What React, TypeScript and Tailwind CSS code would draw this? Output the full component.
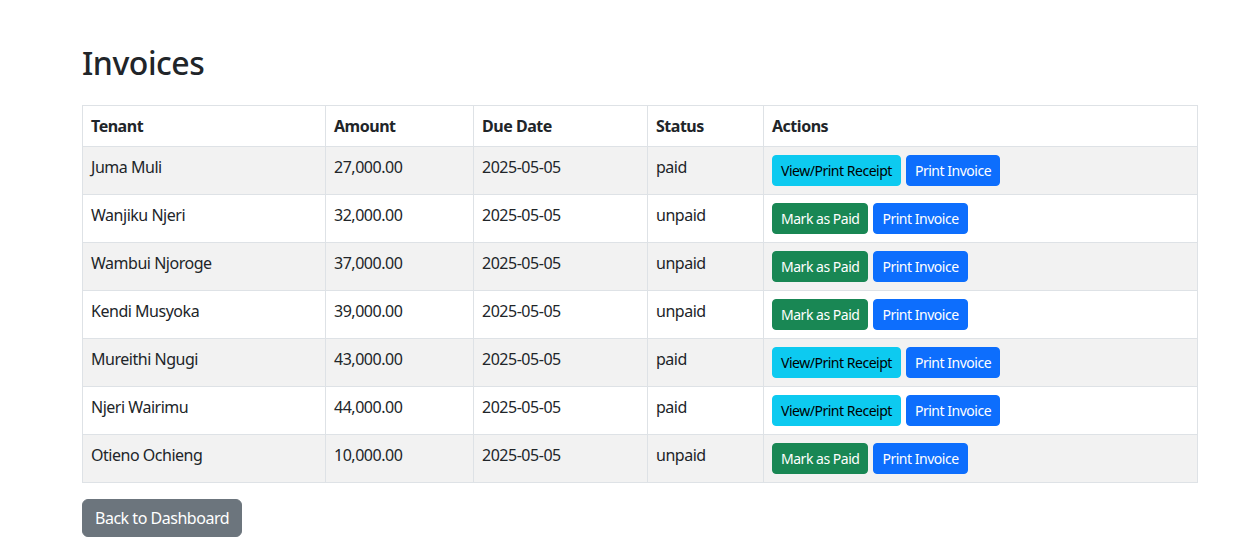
import React from 'react';

type Invoice = {
  tenant: string;
  amount: string;
  due: string;
  status: 'paid' | 'unpaid';
};

const invoices: Invoice[] = [
  { tenant: 'Juma Muli', amount: '27,000.00', due: '2025-05-05', status: 'paid' },
  { tenant: 'Wanjiku Njeri', amount: '32,000.00', due: '2025-05-05', status: 'unpaid' },
  { tenant: 'Wambui Njoroge', amount: '37,000.00', due: '2025-05-05', status: 'unpaid' },
  { tenant: 'Kendi Musyoka', amount: '39,000.00', due: '2025-05-05', status: 'unpaid' },
  { tenant: 'Mureithi Ngugi', amount: '43,000.00', due: '2025-05-05', status: 'paid' },
  { tenant: 'Njeri Wairimu', amount: '44,000.00', due: '2025-05-05', status: 'paid' },
  { tenant: 'Otieno Ochieng', amount: '10,000.00', due: '2025-05-05', status: 'unpaid' },
];

const cell = 'border border-[#dee2e6] px-2 py-2 align-top';

const App = () => {
  return (
    <div className="min-h-screen bg-white text-[#212529] font-['Segoe_UI','Noto_Sans',sans-serif] tracking-[-0.03em] text-base leading-6">
      <div className="w-[1116px] pt-[44px] ml-[82px]">
        <h2 className="text-[32px] leading-[1.2] font-medium mb-[23px]">Invoices</h2>

        <table className="w-full border-collapse mb-4">
          <thead>
            <tr>
              <th className={`${cell} text-left font-bold w-[243px]`}>Tenant</th>
              <th className={`${cell} text-left font-bold w-[148px]`}>Amount</th>
              <th className={`${cell} text-left font-bold w-[174px]`}>Due Date</th>
              <th className={`${cell} text-left font-bold w-[116px]`}>Status</th>
              <th className={`${cell} text-left font-bold`}>Actions</th>
            </tr>
          </thead>
          <tbody>
            {invoices.map((inv, i) => (
              <tr key={inv.tenant} className={i % 2 === 0 ? 'bg-[#f2f2f2]' : 'bg-white'}>
                <td className={cell}>{inv.tenant}</td>
                <td className={cell}>{inv.amount}</td>
                <td className={cell}>{inv.due}</td>
                <td className={cell}>{inv.status}</td>
                <td className={cell}>
                  <div className="flex gap-[5px]">
                    {inv.status === 'paid' ? (
                      <button className="px-2 py-1 text-sm leading-[21px] rounded border border-[#0dcaf0] bg-[#0dcaf0] text-black">
                        View/Print Receipt
                      </button>
                    ) : (
                      <button className="px-2 py-1 text-sm leading-[21px] rounded border border-[#198754] bg-[#198754] text-white">
                        Mark as Paid
                      </button>
                    )}
                    <button className="px-2 py-1 text-sm leading-[21px] rounded border border-[#0d6efd] bg-[#0d6efd] text-white">
                      Print Invoice
                    </button>
                  </div>
                </td>
              </tr>
            ))}
          </tbody>
        </table>

        <button className="px-3 py-1.5 text-base leading-6 rounded-md border border-[#6c757d] bg-[#6c757d] text-white">
          Back to Dashboard
        </button>
      </div>
    </div>
  );
};

export default App;
